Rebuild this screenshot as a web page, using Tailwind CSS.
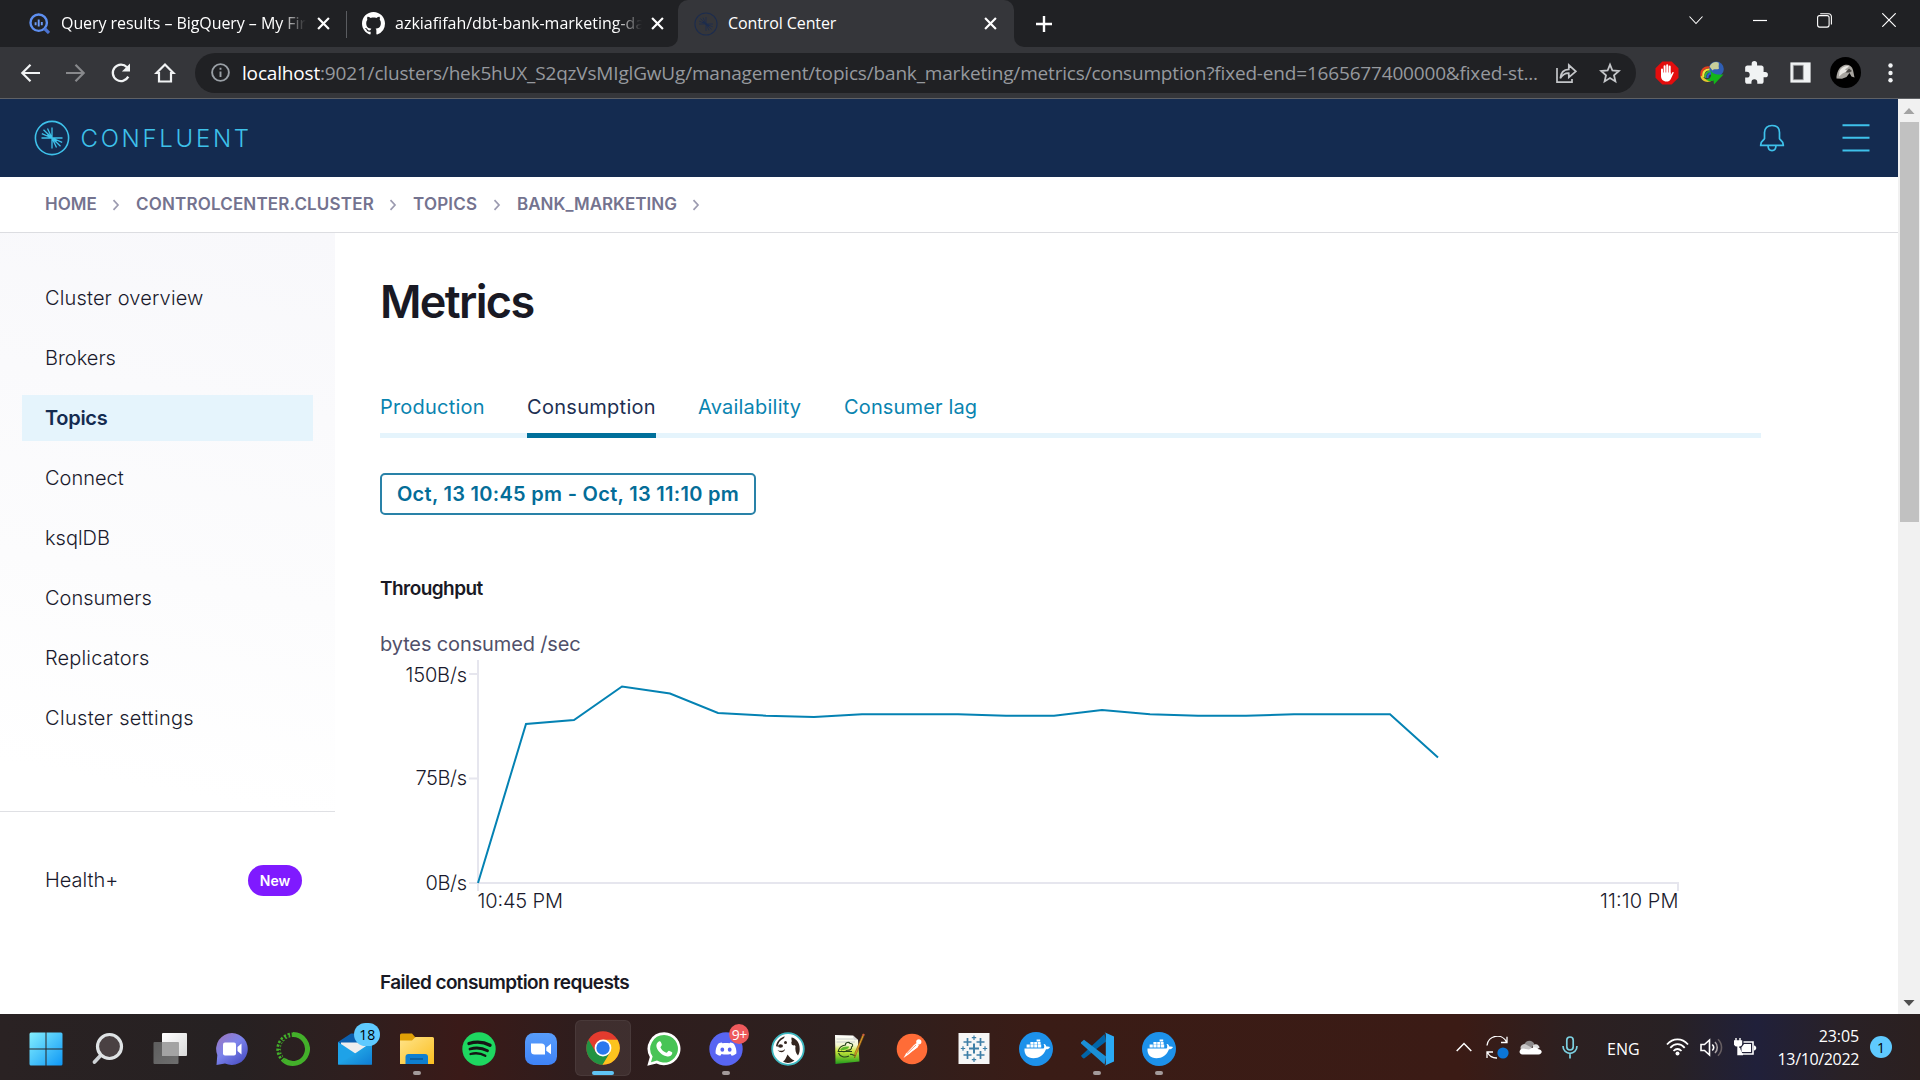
<!DOCTYPE html>
<html lang="en">
<head>
<meta charset="utf-8">
<title>Control Center</title>
<script src="https://cdn.jsdelivr.net/npm/@tailwindcss/browser@4"></script>
</head>
<body class="flex h-[1080px] w-[1920px] flex-col overflow-hidden bg-white font-['Inter',sans-serif]">

<svg width="0" height="0" class="absolute" aria-hidden="true">
  <defs>
    <symbol id="burst" viewBox="0 0 36 36">
      <circle cx="18" cy="18" r="16.6" fill="none" stroke="currentColor" stroke-width="1.6"/>
      <path d="M7.5 18H28.5M18 7.5V28.5M18 18L13.5 8.5M18 18L9.5 9.8M18 18L7.8 13.7M18 18L22.5 27.5M18 18L26.5 26.2M18 18L28.2 22.3" fill="none" stroke="currentColor" stroke-width="1.3"/>
      <path d="M18 18L14.5 13.5L12.5 15.8ZM18 18L21.5 22.5L23.5 20.2Z" fill="currentColor"/>
    </symbol>
    <symbol id="close" viewBox="0 0 12 12"><path d="M1 1L11 11M11 1L1 11" fill="none" stroke="currentColor" stroke-width="2"/></symbol>
    <symbol id="sep" viewBox="0 0 8 12"><path d="M1.5 1.2L6 6L1.5 10.8" fill="none" stroke="currentColor" stroke-width="1.7"/></symbol>
    <symbol id="docker" viewBox="0 0 34 34">
      <circle cx="17" cy="17" r="17" fill="#1d91ea"/>
      <path d="M5.5 16.5H24.5C25.6 15.6 25.4 13.3 24.6 12.2C25.5 11.3 27 12.8 27.4 14.6C28.8 14.3 30.4 14.5 31 15C30.3 16.5 28.8 17.4 27 17.3C24.8 23.3 20 26.3 14.5 26.3C8.5 26.3 5 22.5 5.5 16.5Z" fill="#fff"/>
      <path d="M7.6 12.6h3.2v3H7.6zM11.4 12.6h3.2v3h-3.2zM15.2 12.6h3.2v3h-3.2zM19 12.6h3.2v3H19zM11.4 10h3.2v2.2h-3.2zM15.2 10h3.2v2.2h-3.2zM19 10h2.6v2.2H19zM17.6 7.6h3.6v2h-3.6z" fill="#fff"/>
    </symbol>
    <linearGradient id="win" x1="0" y1="0" x2="1" y2="1"><stop offset="0" stop-color="#84f0ff"/><stop offset="1" stop-color="#0e97f5"/></linearGradient>
    <linearGradient id="tv1" x1="0" y1="0" x2="1" y2="1"><stop offset="0" stop-color="#fff"/><stop offset="1" stop-color="#d9d9d9"/></linearGradient>
    <linearGradient id="tv2" x1="0" y1="0" x2="1" y2="1"><stop offset="0" stop-color="#5e5e5e"/><stop offset="1" stop-color="#6e6e6e"/></linearGradient>
    <linearGradient id="chat" x1="0" y1="0" x2="0.8" y2="1"><stop offset="0" stop-color="#a074b8"/><stop offset=".5" stop-color="#7b83eb"/><stop offset="1" stop-color="#4a4fc4"/></linearGradient>
    <linearGradient id="mail" x1="0" y1="0" x2="1" y2="1"><stop offset="0" stop-color="#2fc3f3"/><stop offset="1" stop-color="#0f7dd4"/></linearGradient>
    <linearGradient id="folder" x1="0" y1="0" x2="1" y2="1"><stop offset="0" stop-color="#ffe48a"/><stop offset="1" stop-color="#fbbe20"/></linearGradient>
    <linearGradient id="zoomg" x1="0" y1="0" x2="0" y2="1"><stop offset="0" stop-color="#589dfb"/><stop offset="1" stop-color="#3f83f7"/></linearGradient>
    <linearGradient id="npp" x1="0" y1="0" x2="0" y2="1"><stop offset="0" stop-color="#fff"/><stop offset=".35" stop-color="#f3f6d0"/><stop offset=".55" stop-color="#cfe93c"/><stop offset="1" stop-color="#1f9c1b"/></linearGradient>
  </defs>
</svg>

<!-- Browser tab strip -->
<div class="flex h-[47px] shrink-0 items-stretch bg-[#202124] font-['Open_Sans','Noto_Sans',sans-serif] text-base text-white">
  <div class="flex w-[346px] items-center pl-[29px]">
    <svg class="h-[21px] w-[21px] shrink-0" viewBox="0 0 21 21"><circle cx="9.7" cy="9.7" r="8.2" fill="none" stroke="#5e8ff0" stroke-width="2.4"/><path d="M15.5 15.5L20 20" stroke="#4a72d0" stroke-width="3.2"/><path d="M6.6 9.3v3M9.7 6.6v7M12.8 9v3.2" stroke="#6d9bf5" stroke-width="1.9"/></svg>
    <div class="mb-[2px] ml-[11px] w-[246px] whitespace-nowrap [mask-image:linear-gradient(to_right,black_220px,transparent_245px)]"><span class="tracking-[-0.07px]">Query results – BigQuery – My Fir</span></div>
    <svg class="ml-[10px] h-[13px] w-[13px]"><use href="#close"/></svg>
  </div>
  <div class="mt-[11px] h-[27px] w-px bg-[#5a5c60]"></div>
  <div class="flex w-[321px] items-center pl-[15px]">
    <svg class="h-[23px] w-[23px] shrink-0" viewBox="0 0 16 16"><path fill="#fff" d="M8 0C3.58 0 0 3.58 0 8c0 3.54 2.29 6.53 5.47 7.59.4.07.55-.17.55-.38 0-.19-.01-.82-.01-1.49-2.01.37-2.53-.49-2.69-.94-.09-.23-.48-.94-.82-1.13-.28-.15-.68-.52-.01-.53.63-.01 1.08.58 1.23.82.72 1.21 1.87.87 2.33.66.07-.52.28-.87.51-1.07-1.78-.2-3.64-.89-3.64-3.95 0-.87.31-1.59.82-2.15-.08-.2-.36-1.02.08-2.12 0 0 .67-.21 2.2.82.64-.18 1.32-.27 2-.27s1.36.09 2 .27c1.53-1.04 2.2-.82 2.2-.82.44 1.1.16 1.92.08 2.12.51.56.82 1.27.82 2.15 0 3.07-1.87 3.75-3.65 3.95.29.25.54.73.54 1.48 0 1.07-.01 1.93-.01 2.2 0 .21.15.46.55.38A8.01 8.01 0 0 0 16 8c0-4.42-3.58-8-8-8z"/></svg>
    <div class="mb-[2px] ml-[10px] w-[248px] whitespace-nowrap [mask-image:linear-gradient(to_right,black_220px,transparent_247px)]">azkiafifah/dbt-bank-marketing-da</div>
    <svg class="ml-[8px] h-[13px] w-[13px]"><use href="#close"/></svg>
  </div>
  <div class="flex w-[10px] bg-[#35363a]"><div class="w-full rounded-br-[10px] bg-[#202124]"></div></div>
  <div class="flex w-[336px] items-center rounded-t-[10px] bg-[#35363a] pl-[16px]">
    <svg class="h-6 w-6 text-[#1c2c4e]"><use href="#burst" width="24" height="24"/></svg>
    <span class="mb-[2px] ml-[10px] w-[109px] tracking-[-0.1px] whitespace-nowrap">Control Center</span>
    <svg class="ml-[147px] h-[13px] w-[13px]"><use href="#close"/></svg>
  </div>
  <div class="flex w-[10px] bg-[#35363a]"><div class="w-full rounded-bl-[10px] bg-[#202124]"></div></div>
  <svg class="mt-[15px] ml-[11px] h-[18px] w-[18px]" viewBox="0 0 18 18"><path d="M9 1V17M1 9H17" stroke="#fff" stroke-width="2.4"/></svg>
  <div class="mr-[24px] ml-auto flex h-10 items-center gap-[50px]">
    <svg class="h-[14px] w-[14px]" viewBox="0 0 14 14"><path d="M.5 3.5L7 10.5L13.5 3.5" fill="none" stroke="#fff" stroke-width="1.1"/></svg>
    <svg class="h-[14px] w-[14px]" viewBox="0 0 14 14"><path d="M0 7.5H14" stroke="#fff" stroke-width="1.2"/></svg>
    <svg class="h-[15px] w-[15px]" viewBox="0 0 15 15" fill="none" stroke="#fff" stroke-width="1.1"><rect x=".6" y="2.6" width="11.5" height="11.5" rx="2"/><path d="M3.2 .7H11.5A3 3 0 0 1 14.4 3.5V11.5"/></svg>
    <svg class="h-[14px] w-[14px]" viewBox="0 0 14 14"><path d="M.3 .3L13.7 13.7M13.7 .3L.3 13.7" stroke="#fff" stroke-width="1.2"/></svg>
  </div>
</div>

<!-- Browser toolbar -->
<div class="flex h-[52px] shrink-0 items-center border-b border-[#5f6165] bg-[#35363a] pl-5">
  <svg class="h-[22px] w-[22px]" viewBox="0 0 22 22" fill="none" stroke="#f1f3f4" stroke-width="2.2"><path d="M20 11H2.5M10.5 2.7L2.3 11L10.5 19.3"/></svg>
  <svg class="ml-[22px] h-[22px] w-[22px]" viewBox="0 0 22 22" fill="none" stroke="#88898c" stroke-width="2.2"><path d="M2 11H19.5M11.5 2.7L19.7 11L11.5 19.3"/></svg>
  <svg class="ml-[24px] h-[22px] w-[22px]" viewBox="0 0 22 22"><path d="M18.3 14.6A8.2 8.2 0 1 1 17 5.2" fill="none" stroke="#f1f3f4" stroke-width="2.3"/><path d="M20 1.5V9.6H11.9Z" fill="#f1f3f4"/></svg>
  <svg class="ml-[22px] h-[22px] w-[22px]" viewBox="0 0 22 22"><path d="M2.5 11L11 2.5L19.5 11H17V19.5H5V11Z" fill="none" stroke="#f1f3f4" stroke-width="2.2"/></svg>
  <div class="ml-[19px] flex h-10 w-[1441px] items-center rounded-full bg-[#202124] pl-[16px]">
    <svg class="h-[19px] w-[19px] shrink-0" viewBox="0 0 19 19"><circle cx="9.5" cy="9.5" r="8.4" fill="none" stroke="#9aa0a6" stroke-width="1.9"/><path d="M9.5 8.5V14M9.5 4.8V6.8" stroke="#9aa0a6" stroke-width="1.9"/></svg>
    <div class="ml-[12px] w-[1299px] pt-[1px] font-['Open_Sans','Noto_Sans',sans-serif] text-[19px] tracking-[-0.175px] whitespace-nowrap text-[#96999e]"><span class="text-white">localhost</span>:9021/clusters/hek5hUX_S2qzVsMIglGwUg/management/topics/bank_marketing/metrics/consumption?fixed-end=1665677400000&amp;fixed-st...</div>
    <svg class="ml-[14px] h-[22px] w-[22px] shrink-0" viewBox="0 0 22 22" fill="none" stroke="#c4c6c9" stroke-width="1.7"><path d="M2 6V20.2H17V17M5.3 16.3C5.8 10.5 9 7.6 13.8 7.4V3L20.8 9.3L13.8 15.4V11.2C10 11 7.5 12.6 5.3 16.3Z"/></svg>
    <svg class="ml-[22px] h-[22px] w-[22px] shrink-0" viewBox="0 0 22 22" fill="none" stroke="#c4c6c9" stroke-width="1.8"><path d="M11 2.6L13.4 8.5L19.8 9L15 13.2L16.4 19.4L11 16.1L5.6 19.4L7 13.2L2.2 9L8.6 8.5Z"/></svg>
  </div>
  <svg class="ml-[19px] h-6 w-6" viewBox="0 0 24 24"><path d="M7.3 .5H16.7L23.5 7.3V16.7L16.7 23.5H7.3L.5 16.7V7.3Z" fill="#e40d0d"/><path d="M7 8.5V13M9.6 5.3V13M12.2 4.2V13M14.7 5.6V13" stroke="#fff" stroke-width="2" stroke-linecap="round"/><path d="M6 11.5H15.7V14L17.3 11.4C18 10.4 19 11 18.6 12L15.8 18C14.8 20 13.6 20.5 11.5 20.5C8 20.5 6 18 6 15Z" fill="#fff"/></svg>
  <svg class="ml-[21px] h-6 w-6" viewBox="0 0 24 24"><circle cx="16.2" cy="8" r="7.6" fill="#2f5eb4"/><path d="M9.500 5.500C11.500 1 16 .2 18.500 1.500C19.500 3.500 18 5 19 7.500C16 9.500 14.500 7 12.500 9.500Z" fill="#c9cf9a"/><path d="M1.500 15C.5 9 5 5.500 9.500 6.500" fill="none" stroke="#e2401f" stroke-width="2.200"/><path d="M3.500 16C2.500 11 5.500 8.300 9.500 8.500" fill="none" stroke="#f2e53b" stroke-width="2.200"/><path d="M5.500 17C4.500 13 7 10.500 10.500 10.500" fill="none" stroke="#35b43c" stroke-width="2"/><path d="M7.500 17C7.500 14 9 12.500 11 12.500" fill="none" stroke="#2c5fd8" stroke-width="2"/><path d="M1.500 15C3 19.500 7 21 12 18.500" fill="none" stroke="#e8c82c" stroke-width="2.400"/><path d="M10.500 9.500C13 13.500 18 14 23.500 13.500L14 23.500L13.500 19.500C10 20.500 7.500 20 6 18.500C10 18 12.500 16 10.500 9.500Z" fill="#12b51a"/></svg>
  <svg class="ml-[19px] h-[26px] w-[26px]" viewBox="0 0 24 24"><path fill="#f1f3f4" d="M20.5 11H19V7c0-1.1-.9-2-2-2h-4V3.5a2.5 2.5 0 0 0-5 0V5H4c-1.1 0-2 .9-2 2v3.8h1.5a2.7 2.7 0 0 1 0 5.4H2V20c0 1.1.9 2 2 2h3.8v-1.5a2.7 2.7 0 0 1 5.4 0V22H17c1.1 0 2-.9 2-2v-4h1.5a2.5 2.5 0 0 0 0-5z"/></svg>
  <svg class="ml-[21px] h-[21px] w-[21px]" viewBox="0 0 21 21"><rect x=".4" y=".4" width="20.2" height="20.2" fill="#f1f3f4"/><rect x="3.2" y="3.2" width="10" height="14.6" fill="#35363a" stroke="#a9aaac" stroke-width=".8"/></svg>
  <svg class="ml-[19px] h-[31px] w-[31px]" viewBox="0 0 31 31"><circle cx="15.5" cy="15.5" r="15.500" fill="#000"/><path d="M6.500 19.500C7.500 14 9.500 9.500 14.500 8C18.500 6.800 22 9 23 13L24.500 20.500L21.500 19.500L19.500 16L16.500 20L12 21.800L6.500 21.500Z" fill="#a8a5a0"/><path d="M9.500 14C11.500 10.500 15.500 8 19 9.500L15 12.500L17.500 14L12.500 16.500L9 19.500Z" fill="#e9e7e3"/><path d="M15.500 15.500L19 11.500L22 14L19.500 15.500Z" fill="#4a4744"/></svg>
  <svg class="ml-[27px] h-5 w-[5px]" viewBox="0 0 5 20" fill="#f1f3f4"><circle cx="2.5" cy="2.500" r="2.200"/><circle cx="2.500" cy="10" r="2.200"/><circle cx="2.500" cy="17.300" r="2.200"/></svg>
</div>

<!-- Page viewport -->
<div class="flex h-[915px] shrink-0">
  <div class="flex w-[1898px] flex-col">
    <header class="flex h-[78px] shrink-0 items-center bg-[#142b50] pr-[28px] pl-[33px] text-[#3ec1ea]">
      <svg class="ml-[.5px] h-9 w-9"><use href="#burst" width="36" height="36"/></svg>
      <span class="ml-[11px] pt-[1px] text-[24px] font-light tracking-[2.7px]">CONFLUENT</span>
      <svg class="ml-auto h-7 w-[26px]" viewBox="0 0 26 28" fill="none" stroke="currentColor" stroke-width="1.7"><path d="M5.500 14.500V8.500C5.500 4 8.500 1.500 13 1.500S20.500 4 20.500 8.500V14.500C20.800 16.500 24.500 16.500 24.300 21.300H1.700C1.500 16.500 5.200 16.500 5.500 14.500ZM9 21.500C9.200 28.300 16.800 28.300 17 21.500"/></svg>
      <svg class="ml-[57px] h-7 w-[28px]" viewBox="0 0 28 28" stroke="currentColor" stroke-width="1.900"><path d="M.5 1.200H27.500M.5 13.700H27.500M.5 26.500H27.500"/></svg>
    </header>
    <nav class="flex h-[56px] shrink-0 items-center border-b border-[#dcdde1] pl-[45px] text-[17px] font-semibold text-[#74738f]">
      <span class="w-[67px]">HOME</span><svg class="h-3 w-2 text-[#9c9bb0]"><use href="#sep"/></svg>
      <span class="ml-4 w-[253px] tracking-[0.17px]">CONTROLCENTER.CLUSTER</span><svg class="h-3 w-2 text-[#9c9bb0]"><use href="#sep"/></svg>
      <span class="ml-4 w-[80px] tracking-[0.2px]">TOPICS</span><svg class="h-3 w-2 text-[#9c9bb0]"><use href="#sep"/></svg>
      <span class="ml-4 w-[175px]">BANK_MARKETING</span><svg class="h-3 w-2 text-[#9c9bb0]"><use href="#sep"/></svg>
    </nav>
    <div class="flex h-[781px] overflow-hidden">
      <aside class="w-[335px] shrink-0 bg-[linear-gradient(190deg,#f8f8fb_0%,#fcfcfd_45%,#ffffff_70%)] text-xl font-light text-[#1a1a2c]">
        <ul class="flex h-[579px] flex-col gap-[14px] border-b border-[#dfe0e4] px-[22px] pt-[42px]">
          <li class="flex h-[46px] items-center pl-[23px] tracking-[0.15px]">Cluster overview</li>
          <li class="flex h-[46px] items-center pl-[23px]">Brokers</li>
          <li class="flex h-[46px] items-center bg-[#e5f4fc] pl-[23px] font-semibold tracking-[-0.3px] text-[#142b50]">Topics</li>
          <li class="flex h-[46px] items-center pl-[23px]">Connect</li>
          <li class="flex h-[46px] items-center pl-[23px]">ksqlDB</li>
          <li class="flex h-[46px] items-center pl-[23px]">Consumers</li>
          <li class="flex h-[46px] items-center pl-[23px] tracking-[0.15px]">Replicators</li>
          <li class="flex h-[46px] items-center pl-[23px] tracking-[0.33px]">Cluster settings</li>
        </ul>
        <div class="mt-[53px] flex h-[31px] items-center justify-between pr-[33px] pl-[45px]">
          <span class="pb-[2px]">Health+</span>
          <span class="flex h-[31px] w-[54px] items-center justify-center rounded-full bg-[#7f1aff] text-[14px] font-semibold text-white">New</span>
        </div>
      </aside>
      <main class="pl-[45px]">
        <h1 class="mt-[42px] text-[45px] leading-[54px] font-semibold tracking-[-1.65px] text-[#191924]">Metrics</h1>
        <div class="mt-[62px] flex h-[47px] w-[1381px] gap-[42px] border-b-[5px] border-[#e5f4fc] text-xl leading-8 text-[#0a84b0]">
          <span class="w-[105px] tracking-[0.2px]">Production</span>
          <span class="h-[47px] w-[129px] border-b-[5px] border-[#00709b] tracking-[0.29px] whitespace-nowrap text-[#1d2f52]">Consumption</span>
          <span class="w-[104px] tracking-[0.22px]">Availability</span>
          <span class="tracking-[0.14px]">Consumer lag</span>
        </div>
        <div class="mt-[35px] flex h-[42px] w-[376px] items-center justify-center rounded-[5px] border-2 border-[#2982a8] text-xl font-semibold tracking-[0.29px] whitespace-nowrap text-[#046d98]">Oct, 13 10:45 pm - Oct, 13 11:10 pm</div>
        <h2 class="mt-[61px] text-[19px] leading-[26px] font-semibold tracking-[-0.55px] text-[#191924]">Throughput</h2>
        <p class="mt-[27px] h-[31px] text-xl leading-[30px] tracking-[-0.13px] text-[#50506a]">bytes consumed /sec</p>
        <svg class="block h-[260px] w-[1381px] text-xl font-light" viewBox="380 660 1381 260">
          <g stroke="#e6e6ee" stroke-width="2"><path d="M478 660V891M469 674H478M469 778.500H478M469 883H1678V891" fill="none"/></g>
          <g fill="#1a1a2c" text-anchor="end" font-size="20">
            <text x="467" y="682" textLength="61.500">150B/s</text><text x="467" y="785" textLength="51.500">75B/s</text><text x="467" y="890" textLength="41.500">0B/s</text>
            <text x="1678.500" y="908" textLength="78.500">11:10 PM</text>
          </g>
          <text x="477.500" y="908" fill="#1a1a2c" textLength="85.500">10:45 PM</text>
          <polyline fill="none" stroke="#0482b3" stroke-width="2" points="478,883 526,724 574,720 622,686.500 670,693.500 718,713 766,715.700 814,717 862,714.300 910,714.300 958,714.300 1006,715.700 1054,715.700 1102,710 1150,714.300 1198,715.700 1246,715.700 1294,714.300 1342,714.300 1390,714.300 1438,757.500"/>
        </svg>
        <h2 class="mt-[50px] text-[19px] leading-[26px] font-semibold tracking-[-0.59px] text-[#191924]">Failed consumption requests</h2>
      </main>
    </div>
  </div>
  <!-- Scrollbar -->
  <div class="flex w-[22px] flex-col items-center bg-[#f1f1f1]">
    <svg class="h-[23px] w-[22px] shrink-0" viewBox="0 0 22 23"><path d="M5.500 15L11 9L16.500 15Z" fill="#a3a3a3"/></svg>
    <div class="h-[400px] w-[19px] bg-[#c1c1c1]"></div>
    <svg class="mt-auto h-[23px] w-[22px] shrink-0" viewBox="0 0 22 23"><path d="M5.500 9L11 15L16.500 9Z" fill="#505050"/></svg>
  </div>
</div>

<!-- Taskbar -->
<footer class="flex h-[66px] shrink-0 items-center bg-[linear-gradient(90deg,#2a2223_0%,#262122_12%,#2e1f1f_18%,#3a1a18_24%,#2f1d1d_30%,#2d201f_44%,#3a1c16_54%,#3b1b15_76%,#2c2021_82%,#282124_87%,#20203a_91.5%,#292126_96%,#2b2020_100%)] pt-[2px] pl-[18px] text-white">
  <div class="flex gap-[5.85px]">
    <div class="flex h-14 w-14 items-center justify-center pt-0.5 pr-px"><svg class="h-[34px] w-[34px]" viewBox="0 0 34 34"><path d="M.5 2A1.500 1.500 0 0 1 2 .5H16.500V16.500H.5ZM17.500 .5H32A1.500 1.500 0 0 1 33.500 2V16.500H17.500ZM.5 17.500H16.500V33.500H2A1.500 1.500 0 0 1 .5 32ZM17.500 17.500H33.500V32A1.500 1.500 0 0 1 32 33.500H17.500Z" fill="url(#win)"/></svg></div>
    <div class="flex h-14 w-14 items-center justify-center pt-0.5"><svg class="h-[34px] w-[34px]" viewBox="0 0 34 34"><path d="M11 22L3.500 30" stroke="#cfd3d6" stroke-width="3.800" stroke-linecap="round"/><circle cx="18.500" cy="14.500" r="12" fill="#4a4143" stroke="#dfe3e5" stroke-width="3.200"/></svg></div>
    <div class="flex h-14 w-14 items-center justify-center pt-0.5"><svg class="h-[34px] w-[36px]" viewBox="0 0 36 34"><rect x="10" y="1" width="25" height="23" rx="1" fill="url(#tv1)"/><rect x="1.500" y="10" width="25" height="22" rx="1" fill="url(#tv2)"/><path d="M10 10H26.500V24H10Z" fill="#a3a3a3"/></svg></div>
    <div class="flex h-14 w-14 items-center justify-center pt-0.5"><svg class="h-[34px] w-[34px]" viewBox="0 0 34 34"><path d="M17 1A16 16 0 1 1 10 31.500L1.500 33L2.300 23A16 16 0 0 1 17 1Z" fill="url(#chat)"/><rect x="8" y="10.500" width="13" height="13" rx="2" fill="#fff"/><path d="M22.500 15L26.500 11.500V22.500L22.500 19Z" fill="#fff"/></svg></div>
    <div class="flex h-14 w-14 items-center justify-center pt-0.5"><svg class="h-[34px] w-[34px]" viewBox="0 0 34 34" fill="none" stroke="#43b02a"><path d="M17 2.600A14.400 14.400 0 1 1 8 28.200" stroke-width="5"/><path d="M8 28.500A14.400 14.400 0 0 1 17 2.800" stroke-width="4.500" stroke-dasharray="2.200 1.600"/><path d="M6 25A14 14 0 0 1 14 3.500" stroke="#2a2223" stroke-width="1.200" stroke-dasharray="3 1.500"/></svg></div>
    <div class="relative flex h-14 w-14 items-center justify-center pt-0.5"><svg class="h-[34px] w-[34px]" viewBox="0 0 34 34"><path d="M0 10L13 1.500H21L34 10V20H0Z" fill="#0b5fae"/><path d="M3 10.500H31V22H3Z" fill="#eee"/><path d="M0 10L34 32.500H0Z" fill="#1ea2e8"/><path d="M34 10V32.500H0L17 21.500Z" fill="url(#mail)"/></svg><span class="absolute top-[3px] right-[3px] flex h-[23px] w-[26px] items-center justify-center rounded-full bg-[#5fcaff] font-['Open_Sans',sans-serif] text-[14px] text-black">18</span></div>
    <div class="relative flex h-14 w-14 items-center justify-center pt-0.5"><svg class="h-[34px] w-[34px]" viewBox="0 0 34 34"><path d="M0 3A1.500 1.500 0 0 1 1.500 1.500H12L15.500 5.500V12H0Z" fill="#e0a006"/><path d="M0 8.500H12L15.500 5H32.500A1.500 1.500 0 0 1 34 6.500V32H0Z" fill="url(#folder)"/><path d="M5.500 32V25A3 3 0 0 1 8.500 22H25A3 3 0 0 1 28 25V32Z" fill="#0f7fd0"/><path d="M10 27H23" stroke="#0a4f86" stroke-width="1.200"/></svg><i class="absolute bottom-[1px] h-1 w-2 rounded-full bg-[#a39a9a]"></i></div>
    <div class="flex h-14 w-14 items-center justify-center pt-0.5"><svg class="h-[34px] w-[34px]" viewBox="0 0 34 34"><circle cx="17" cy="17" r="16.700" fill="#1ed760"/><g fill="none" stroke="#151515" stroke-linecap="round"><path d="M7 11.500C14 9.300 22 10 28 13.300" stroke-width="3.400"/><path d="M8 17C14 15.300 20.500 16 25.500 18.800" stroke-width="2.800"/><path d="M8.500 22C13.500 20.700 19 21.300 23.300 23.800" stroke-width="2.300"/></g></svg></div>
    <div class="flex h-14 w-14 items-center justify-center pt-0.5"><svg class="h-[34px] w-[34px]" viewBox="0 0 34 34"><rect x="1" y="1" width="32" height="32" rx="8.500" fill="url(#zoomg)"/><path d="M7 11.500H17.500A3.500 3.500 0 0 1 21 15V22.500H10.500A3.500 3.500 0 0 1 7 19Z" fill="#fff"/><path d="M22.300 15.500L27 11.800V22.300L22.300 18.800Z" fill="#fff"/></svg></div>
    <div class="relative flex h-14 w-14 items-center justify-center rounded-md border border-white/5 bg-white/8"><svg class="h-[34px] w-[34px]" viewBox="0 0 34 34"><circle cx="17" cy="17" r="16.700" fill="#e33b2e"/><path d="M2.500 8.700A16.700 16.700 0 0 0 17 33.700L24.200 21.200L9.800 21.200Z" fill="#229342"/><path d="M31.500 8.700A16.700 16.700 0 0 1 16.500 33.700L24.200 21.200L17 8.700Z" fill="#fcc31e"/><circle cx="17" cy="17" r="8.400" fill="#fff"/><circle cx="17" cy="17" r="6.700" fill="#2a78ee"/></svg><i class="absolute bottom-0 h-1 w-[22px] rounded-full bg-[#60c4f5]"></i></div>
    <div class="flex h-14 w-14 items-center justify-center pt-0.5"><svg class="h-[34px] w-[34px]" viewBox="0 0 34 34"><path d="M17.300 .3A16.500 16.500 0 1 1 9.500 31.500L.3 33.800L2.800 25A16.500 16.500 0 0 1 17.300 .3Z" fill="#fff"/><path d="M17.300 3A13.800 13.800 0 1 1 10 28.600L4 30.200L5.600 24.500A13.800 13.800 0 0 1 17.300 3Z" fill="#48c456"/><path d="M11.800 9.500C13.300 8.600 13.800 9.500 14.800 12.500C15 13.800 13.200 14.700 13.500 15.500C14.800 18 16.500 19.700 19.300 20.800C20.200 21 21 18.800 22 18.800C24.500 19.800 25.500 20.300 25.300 21.300C24.500 24 22 25 19.500 24.300C14.500 23 11 19.500 9.500 15C9 12.500 10 10.500 11.800 9.500Z" fill="#fff"/></svg></div>
    <div class="relative flex h-14 w-14 items-center justify-center pt-0.5"><svg class="h-[34px] w-[34px]" viewBox="0 0 34 34"><circle cx="17" cy="17" r="16.700" fill="#5865f2"/><path d="M13.500 11.300L12.700 10.500C10.800 10.800 9.800 11.300 9 12C7.200 15 6.400 18 6.600 21.500C8 22.800 9.600 23.500 11.300 23.800L12.500 21.900C15.500 22.700 18.500 22.700 21.500 21.900L22.700 23.800C24.400 23.500 26 22.800 27.400 21.500C27.600 18 26.800 15 25 12C24.200 11.300 23.200 10.800 21.300 10.500L20.500 11.300C18.200 11 15.800 11 13.500 11.300Z" fill="#fff"/><ellipse cx="13.300" cy="17.700" rx="1.900" ry="2.100" fill="#5865f2"/><ellipse cx="20.700" cy="17.700" rx="1.900" ry="2.100" fill="#5865f2"/></svg><span class="absolute top-[4px] right-[5px] flex h-[20px] w-[20px] items-center justify-center rounded-full bg-[#ee5a5c] font-['Open_Sans',sans-serif] text-[14px] tracking-[-0.5px]">9+</span><i class="absolute bottom-[1px] h-1 w-2 rounded-full bg-[#a39a9a]"></i></div>
    <div class="flex h-14 w-14 items-center justify-center pt-0.5"><svg class="h-[34px] w-[34px]" viewBox="0 0 34 34"><circle cx="17" cy="17" r="15.800" fill="#fff" stroke="#3db9c2" stroke-width="1.800"/><path d="M5 14C6 8.500 10 5 14 4.500L12.500 6.500C9 8 7 11 6.500 15Z" fill="#33251f"/><path d="M20.500 5.500C24.500 6 28 10 28.500 14.500C29 18 28.500 21 27 23.500C24.500 21 24 17.500 24.500 14C22 12.500 20 9 20.500 5.500Z" fill="#33251f"/><circle cx="14.500" cy="10.500" r="1.500" fill="#33251f"/><ellipse cx="22.500" cy="10.800" rx="2.200" ry="2.600" fill="#33251f"/><ellipse cx="9.500" cy="14" rx="2.500" ry="1.800" fill="#33251f"/><path d="M12 29.500C14.500 28 15 25.500 16.500 22.500C18.500 25 20 27.500 23.500 28.500C20 31.500 15 31.500 12 29.500ZM6.500 18C9 19.500 12.500 19 14 17C14 20 9.500 22 6.500 18Z" fill="#33251f"/></svg></div>
    <div class="flex h-14 w-14 items-center justify-center pt-0.5"><svg class="h-[34px] w-[34px]" viewBox="0 0 34 34"><path d="M2 3L20 3.500L25 8L26.500 29.500L2.500 32Z" fill="url(#npp)"/><path d="M3.500 7H20M3.500 10H22" stroke="#bfc4c9" stroke-width=".8"/><path d="M20 3.500L20.500 8.300L25 8Z" fill="#d8d8d8"/><path d="M5 20C6 15 9 13.500 12.500 13C12 10.500 16 9.500 17 11.500C20 11 20.500 14 18.500 15C19 17 17 18.500 14 18.300C12 20 10 20 8 19M5 19.500H19M5.500 21C7 25 12 26 16 24M17 22.500C19 21.500 21 24 23 23.500" fill="none" stroke="#26441b" stroke-width="1.100"/><path d="M7 18C8.500 15 12 14 16 14.500C16 17 12 18.500 7 18Z" fill="#5bb92a"/><path d="M31.500 2.500L23.500 21.500L21.500 26L22 20.800L30 1.800Z" fill="#e0a02c" stroke="#855313" stroke-width=".6"/><path d="M30 1.800L31.500 2.500L31 4L29.300 3.300Z" fill="#d2534d"/></svg></div>
    <div class="flex h-14 w-14 items-center justify-center pt-0.5"><svg class="h-[34px] w-[34px]" viewBox="0 0 34 34"><circle cx="17" cy="17" r="15.300" fill="#ff6c37"/><path d="M8.500 26L11 21.500L19 13L22 15.500L13.500 22.500Z" fill="#fff"/><path d="M19 13L21.500 11L24 13L22.500 15.500L17.500 19" fill="#fff"/><circle cx="23.800" cy="9.800" r="2.600" fill="#fff"/><path d="M12 21.500L21 13" stroke="#ff6c37" stroke-width=".7"/></svg></div>
    <div class="flex h-14 w-14 items-center justify-center pt-0.5"><svg class="h-[34px] w-[34px]" viewBox="0 0 34 34"><path d="M1.500 1H32.500V32H1.500Z" fill="#f6f6f6"/><g stroke="#3d7ea6" fill="none"><path d="M17 11.500V21.500M12 16.500H22" stroke-width="2"/><path d="M10.500 6V14M6.500 10H14.500M23.500 6V14M19.500 10H27.500M10.500 19V27M6.500 23H14.500M23.500 19V27M19.500 23H27.500" stroke-width="1.700"/><path d="M17 3.500V8M14.800 5.700H19.200M17 25.500V30M14.800 27.700H19.200M6 14.200V18.700M3.800 16.500H8.200M28 14.200V18.700M25.800 16.500H30.200" stroke-width="1.200"/></g></svg></div>
    <div class="flex h-14 w-14 items-center justify-center pt-0.5"><svg class="h-[34px] w-[34px]"><use href="#docker"/></svg></div>
    <div class="relative flex h-14 w-14 items-center justify-center pt-0.5"><svg class="h-[34px] w-[34px]" viewBox="0 0 34 34"><path d="M1 23.800L24.500 2L26 9.500L4.500 26.300C3.500 27 1.500 25 1 23.800Z" fill="#0065a9"/><path d="M1 10.200L4 7.700L26 24.500L24.500 32.500L1 11.500Z" fill="#1b8fd6"/><path d="M24.500 .3L34 4.500V29.500L24.500 33.700C25.500 33 25.800 32.500 25.800 31.500V2.500C25.800 1.500 25.500 .8 24.500 .3Z" fill="#2aaaf5"/></svg><i class="absolute bottom-[1px] h-1 w-2 rounded-full bg-[#a39a9a]"></i></div>
    <div class="relative flex h-14 w-14 items-center justify-center pt-0.5"><svg class="h-[34px] w-[34px]"><use href="#docker"/></svg><i class="absolute bottom-[1px] h-1 w-2 rounded-full bg-[#a39a9a]"></i></div>
  </div>
  <!-- System tray -->
  <div class="mr-[28px] mb-[2px] ml-auto flex items-center font-['Open_Sans','Noto_Sans',sans-serif]">
    <svg class="h-[10px] w-4" viewBox="0 0 16 10"><path d="M.7 9L8 1.500L15.300 9" fill="none" stroke="#fff" stroke-width="1.500"/></svg>
    <svg class="ml-[14px] h-[23px] w-[23px]" viewBox="0 0 23 23" fill="none" stroke="#fff" stroke-width="1.300"><path d="M1 9.500A10.300 10.300 0 0 1 20.500 6M21 .8V6.500H15M1 22V16H7M1.500 16.500A10.300 10.300 0 0 0 11 22"/><circle cx="17" cy="17" r="5.600" fill="#0b76d8" stroke="none"/></svg>
    <svg class="ml-[10px] h-[15px] w-[23px]" viewBox="0 0 23 15"><path d="M5 5C6.500 0 13.500-1 15.500 4.500L12 8L3 9Z" fill="#8e8b8c"/><path d="M1.500 7A4 4 0 0 1 7 4.500L15 9L10 13L2 13Z" fill="#c9c7c8"/><path d="M14 5.200C17.500 2.800 20.500 5.300 20.500 8L14 10Z" fill="#dedede"/><path d="M3.500 14.500C-.5 14.500-.5 9 4 8.500L10 9.500L14 7.500C17 6.500 18.500 8 19.500 9.200C24 9.500 23.500 14.500 19.500 14.500Z" fill="#fff"/></svg>
    <svg class="ml-[20px] h-[23px] w-4" viewBox="0 0 16 23" fill="none" stroke="#7cd0e0" stroke-width="1.700"><rect x="4.800" y="1" width="6.400" height="13" rx="3.200"/><path d="M1 10C1 19.700 15 19.700 15 10M8 17.500V22.500"/></svg>
    <span class="ml-[29px] w-[33px] pt-1 text-base">ENG</span>
    <svg class="ml-[26px] h-[18px] w-[23px]" viewBox="0 0 23 18" fill="none" stroke="#fff" stroke-width="1.800"><path d="M1 6.500C7-.3 16-.3 22 6.500M4.300 9.800C8.500 5 14.500 5 18.700 9.800M7.500 13C10 10.300 13 10.300 15.500 13"/><circle cx="11.500" cy="15.500" r="2" fill="#fff" stroke="none"/></svg>
    <svg class="ml-[11px] h-[19px] w-[23px]" viewBox="0 0 23 19" fill="none" stroke="#fff" stroke-width="1.600"><path d="M1 6.500H4.500L9.500 2V17L4.500 12.500H1Z"/><path d="M12.300 6.500C14 8.300 14 10.700 12.300 12.500"/><path d="M15 4C18 7 18 12 15 15" stroke="#aaa3a6"/><path d="M18 1.300C22.700 6 22.700 13 18 17.700" stroke="#665e62"/></svg>
    <svg class="ml-[11px] h-[18px] w-[23px]" viewBox="0 0 23 18"><path d="M2 0V3M6 0V3M.5 3H7.500V5.500C7.500 7.500 6 8 4 8C2 8 .5 7.500 .5 5.500ZM4 7V16.500H9" fill="#fff" stroke="#fff" stroke-width="1.400"/><path d="M9.500 4H19V16H5.500V10" fill="none" stroke="#fff" stroke-width="1.600"/><path d="M10 6H17V14H7.500V9.500Z" fill="#fff"/><path d="M20 7.500C23 8 23 12 20 12.500Z" fill="#fff"/></svg>
    <div class="ml-[16px] flex w-[86px] flex-col items-end pt-[2px] text-base leading-[23px]"><span class="tracking-[-0.1px]">23:05</span><span class="tracking-[-0.35px]">13/10/2022</span></div>
    <span class="ml-[11px] flex h-[22px] w-[22px] items-center justify-center rounded-full bg-[#5fcaff] text-[14px] text-black">1</span>
  </div>
</footer>
</body>
</html>
